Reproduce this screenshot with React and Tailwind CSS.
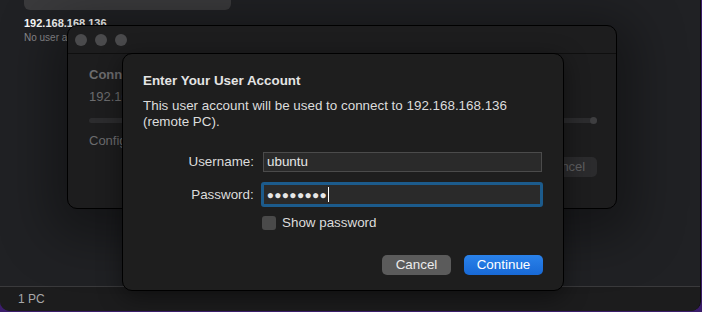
export default function App() {
  const font = { fontFamily: '"Liberation Sans", Arial, sans-serif' };
  return (
    <div className="w-[702px] h-[312px] bg-[#3b1d6b] overflow-hidden" style={font}>
      <div className="w-[701px] h-[311px] bg-[#202124] rounded-b-[10px] flex flex-col overflow-hidden border-r border-[#0c0c0c]">
        {/* main area */}
        <div className="relative flex-1">
          {/* host card */}
          <div className="absolute left-[24px] top-0 w-[207px]">
            <div className="h-[10px] bg-[#3a3a3c] rounded-b-[6px]" />
            <div className="mt-[7px] text-[11px] font-bold text-white leading-[13px]">192.168.168.136</div>
            <div className="text-[10px] text-[#8a8a8d] leading-[13px] mt-[1px]">No user account</div>
          </div>

          {/* background window */}
          <div className="absolute left-[67px] top-[25px] w-[550px] h-[184px] bg-[#1d1d1e] rounded-[10px] border border-black shadow-[0_12px_50px_18px_rgba(0,0,0,0.35)] overflow-hidden">
            <div className="h-[28px] border-b border-[#0f0f0f] flex items-center gap-[8px] pl-[7px]">
              <span className="w-[12px] h-[12px] rounded-full bg-[#4a4a4c]" />
              <span className="w-[12px] h-[12px] rounded-full bg-[#4a4a4c]" />
              <span className="w-[12px] h-[12px] rounded-full bg-[#4a4a4c]" />
            </div>
            <div className="pl-[21px] pr-[19px] pt-[13px] text-[#6c6c6e]">
              <div className="text-[13px] font-bold leading-[16px]">Connecting</div>
              <div className="text-[13px] leading-[16px] mt-[6px]">192.168.168.136</div>
              <div className="mt-[13px] h-[5px] rounded-full bg-[#2c2c2e] relative">
                <span className="absolute right-0 top-[-1px] w-[7px] h-[7px] rounded-full bg-[#3e3e40]" />
              </div>
              <div className="text-[13px] leading-[16px] mt-[10px]">Configuring</div>
              <div className="flex justify-end mt-[8px]">
                <div className="w-[64px] h-[20px] rounded-[5px] bg-[#2b2b2d] text-[13px] text-[#5e5e60] flex items-center justify-center">Cancel</div>
              </div>
            </div>
          </div>

          {/* sheet */}
          <div className="absolute left-[122px] top-[53px] w-[442px] h-[238px] bg-[#1e1e1e] rounded-[10px] border border-black shadow-[0_6px_24px_rgba(0,0,0,0.45)] pl-[20px] pr-[20px] pt-[19px] flex flex-col">
            <div className="text-[13.4px] font-bold text-[#e4e4e4] leading-[16px]">Enter Your User Account</div>
            <div className="text-[13.4px] text-[#dcdcdc] leading-[16px] mt-[9px]">
              This user account will be used to connect to 192.168.168.136
              <br />(remote PC).
            </div>

            <div className="mt-[22px] flex flex-col">
              <div className="flex items-center">
                <div className="w-[111px] text-right text-[13.4px] text-[#dcdcdc]">Username:</div>
                <div className="ml-[9px] w-[279px] h-[20px] bg-[#2a2a2a] border border-[#4b4b4b] text-[13.4px] text-[#e6e6e6] flex items-center pl-[3px]">ubuntu</div>
              </div>
              <div className="flex items-center mt-[10px]">
                <div className="w-[111px] text-right text-[13.4px] text-[#dcdcdc]">Password:</div>
                <div className="ml-[7px] w-[283px] h-[25px] rounded-[3px] border-[3px] border-[#1c5b8c] bg-[#2a2a2a] flex items-center pl-[3px]">
                  <span className="text-[12px] tracking-[0.3px] text-[#e6e6e6] leading-none">●●●●●●●●</span>
                  <span className="w-[1px] h-[15px] bg-white ml-[1px]" />
                </div>
              </div>
              <div className="flex items-center mt-[6px] ml-[119px]">
                <span className="w-[14px] h-[14px] rounded-[3px] bg-[#4a4a4a]" />
                <span className="ml-[6px] text-[13.4px] text-[#dcdcdc]">Show password</span>
              </div>
            </div>

            <div className="mt-auto mb-[15px] flex justify-end gap-[13px]">
              <div className="w-[69px] h-[20px] rounded-[5px] bg-[#5b5b5b] text-[13.4px] text-[#ececec] flex items-center justify-center">Cancel</div>
              <div className="w-[79px] h-[20px] rounded-[5px] bg-gradient-to-b from-[#2a82ea] to-[#1869d6] text-[13.4px] text-white flex items-center justify-center">Continue</div>
            </div>
          </div>
        </div>

        {/* status bar */}
        <div className="h-[25px] border-t border-[#3a3a3c] bg-[#1c1c1d] flex items-center pl-[18px] text-[12px] text-[#a8a8aa]">1 PC</div>
      </div>
    </div>
  );
}
